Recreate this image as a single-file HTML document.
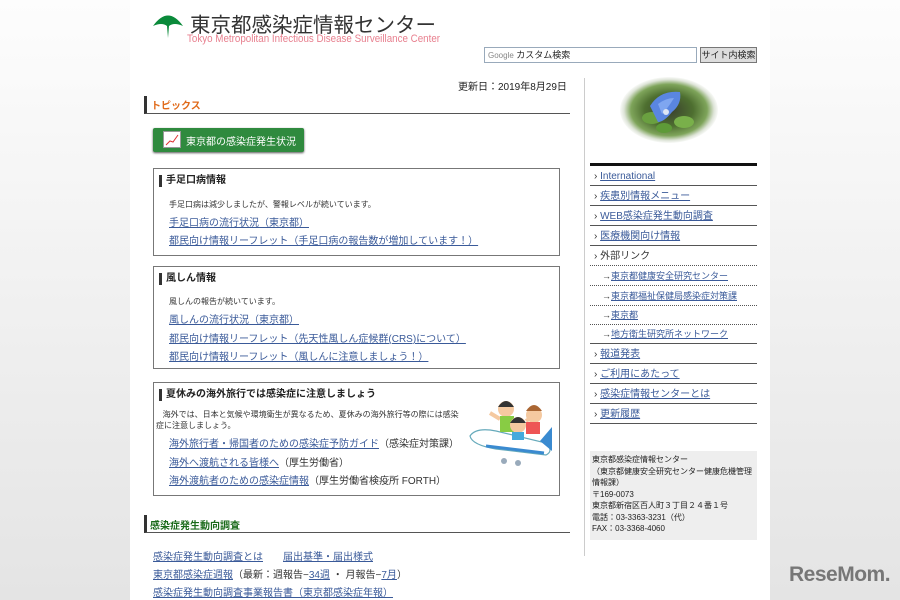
<!DOCTYPE html>
<html><head><meta charset="utf-8">
<style>
*{margin:0;padding:0;box-sizing:border-box}
body{width:900px;height:600px;overflow:hidden;background:linear-gradient(#fdfdfd,#e4e4e4);font-family:"Liberation Sans","Noto Sans CJK JP",sans-serif;color:#333;position:relative}
.col{position:absolute;left:130px;top:0;width:640px;height:600px;background:#fff}
.a{position:absolute;white-space:nowrap}
a{color:#3a5a99;text-decoration:underline}
.box{position:absolute;left:153px;width:407px;border:1px solid #777;background:#fff}
.bh{position:absolute;left:5px;top:6px;font-size:10px;font-weight:bold;color:#222;border-left:3px solid #333;padding-left:4px;line-height:12px}
.sm{font-size:8px;color:#333}
.ln{font-size:10px}
.side{position:absolute;left:590px;width:167px;font-size:10px;border-bottom:1px solid #555;height:20px;line-height:21px;padding-left:4px}
.side.d{border-bottom:1px dotted #555}
.side.sub{padding-left:12px}
</style></head><body>
<div class="col"></div>
<svg class="a" style="left:152px;top:11px" width="32" height="28" viewBox="0 0 32 28"><path d="M1 15 Q16 -6 31 15 Q22 11 17 15 L16 27 L15 15 Q10 11 1 15Z" fill="#0a8a3a"/></svg>
<div class="a" style="left:190px;top:8px;font-size:20.5px;color:#333">東京都感染症情報センター</div>
<div class="a" style="left:187px;top:33px;font-size:11px;color:#e8808f;transform:scaleX(0.89);transform-origin:left">Tokyo Metropolitan Infectious Disease Surveillance Center</div>
<div class="a" style="left:484px;top:47px;width:213px;height:16px;border:1px solid #9ab;font-size:9px;line-height:14px;padding-left:3px;color:#222"><span style="color:#888;font-size:8px">Google</span> カスタム検索</div>
<div class="a" style="left:700px;top:47px;width:57px;height:16px;border:1px solid #777;background:#ddd;font-size:9px;line-height:14px;text-align:center;color:#222">サイト内検索</div>
<div class="a" style="left:584px;top:78px;width:1px;height:478px;background:#ccc"></div>
<div class="a" style="left:458px;top:78px;font-size:10px;color:#222">更新日：2019年8月29日</div>
<div class="a" style="left:144px;top:96px;width:426px;height:18px;border-bottom:1px solid #555;border-left:3px solid #333"></div>
<div class="a" style="left:151px;top:97px;font-size:10px;font-weight:bold;color:#e06a1a">トピックス</div>
<div class="a" style="left:153px;top:128px;width:151px;height:24px;background:#2f8a3e;border-radius:2px;box-shadow:0 1px 2px #555"></div>
<div class="a" style="left:163px;top:131px;width:18px;height:17px;background:#fff;border:1px solid #999"><svg width="16" height="15"><path d="M2 13 L6 9 L9 10 L14 3" stroke="#d33" fill="none"/></svg></div>
<div class="a" style="left:186px;top:133px;font-size:10px;color:#fff">東京都の感染症発生状況</div>

<div class="box" style="top:168px;height:88px">
<div class="bh">手足口病情報</div>
<div class="a sm" style="left:15px;top:30px">手足口病は減少しましたが、警報レベルが続いています。</div>
<div class="a ln" style="left:15px;top:45px"><a>手足口病の流行状況（東京都）</a></div>
<div class="a ln" style="left:15px;top:63px"><a>都民向け情報リーフレット（手足口病の報告数が増加しています！）</a></div>
</div>
<div class="box" style="top:266px;height:103px">
<div class="bh">風しん情報</div>
<div class="a sm" style="left:15px;top:29px">風しんの報告が続いています。</div>
<div class="a ln" style="left:15px;top:44px"><a>風しんの流行状況（東京都）</a></div>
<div class="a ln" style="left:15px;top:63px"><a>都民向け情報リーフレット（先天性風しん症候群(CRS)について）</a></div>
<div class="a ln" style="left:15px;top:81px"><a>都民向け情報リーフレット（風しんに注意しましょう！）</a></div>
</div>
<div class="box" style="top:382px;height:114px">
<div class="bh">夏休みの海外旅行では感染症に注意しましょう</div>
<div class="a sm" style="left:2px;top:26px;white-space:normal;width:305px;line-height:11px">&nbsp;&nbsp;&nbsp;海外では、日本と気候や環境衛生が異なるため、夏休みの海外旅行等の際には感染症に注意しましょう。</div>
<div class="a ln" style="left:15px;top:52px"><a>海外旅行者・帰国者のための感染症予防ガイド</a>（感染症対策課）</div>
<div class="a ln" style="left:15px;top:71px"><a>海外へ渡航される皆様へ</a>（厚生労働省）</div>
<div class="a ln" style="left:15px;top:89px"><a>海外渡航者のための感染症情報</a>（厚生労働省検疫所 FORTH）</div>
<svg class="a" style="left:312px;top:8px" width="90" height="80" viewBox="0 0 90 80">
<path d="M4 45 Q10 36 30 40 L80 52 Q88 60 80 64 L30 58 Q6 54 4 45Z" fill="#fff" stroke="#6ab" stroke-width="1.2"/>
<path d="M20 55 L78 62" stroke="#3a8ad0" stroke-width="3"/>
<path d="M74 50 L86 36 L86 60Z" fill="#3a8ad0"/>
<path d="M24 22 L34 28 M60 30 L72 22" stroke="#f5c9a0" stroke-width="4"/>
<circle cx="40" cy="18" r="8" fill="#f5c9a0"/><path d="M32 16 Q40 4 48 16" fill="#333"/>
<rect x="34" y="25" width="14" height="16" fill="#8c4"/>
<circle cx="68" cy="24" r="8" fill="#f5c9a0"/><path d="M60 20 Q68 8 76 20" fill="#a63"/>
<rect x="60" y="31" width="14" height="12" fill="#e55"/>
<circle cx="52" cy="34" r="8" fill="#f5c9a0"/><path d="M44 32 Q52 20 60 32" fill="#333"/>
<rect x="46" y="41" width="12" height="8" fill="#4ad"/>
<circle cx="38" cy="70" r="3" fill="#9ab"/><circle cx="52" cy="72" r="3" fill="#9ab"/>
</svg>
</div>

<div class="a" style="left:144px;top:515px;width:426px;height:18px;border-bottom:1px solid #555;border-left:3px solid #333"></div>
<div class="a" style="left:150px;top:517px;font-size:10px;font-weight:bold;color:#1a6a1a">感染症発生動向調査</div>
<div class="a ln" style="left:153px;top:548px"><a>感染症発生動向調査とは</a>　　<a>届出基準・届出様式</a></div>
<div class="a ln" style="left:153px;top:566px"><a>東京都感染症週報</a>（最新：週報告−<a>34週</a> ・ 月報告−<a>7月</a>）</div>
<div class="a ln" style="left:153px;top:584px"><a>感染症発生動向調査事業報告書（東京都感染症年報）</a></div>

<div class="a" style="left:620px;top:77px;width:98px;height:66px;border-radius:50%;background:radial-gradient(ellipse at center,#3a3f2e 0%,#4e6f30 35%,#7ea45a 55%,rgba(200,210,190,0.6) 65%,rgba(255,255,255,0) 72%)"></div>
<svg class="a" style="left:636px;top:82px" width="64" height="56" viewBox="0 0 64 56">
<ellipse cx="16" cy="36" rx="10" ry="6" fill="#6aa040"/><ellipse cx="48" cy="40" rx="10" ry="6" fill="#79b04a"/><ellipse cx="28" cy="46" rx="8" ry="5" fill="#5e9a38"/>
<path d="M14 24 Q24 8 44 10 Q46 22 36 30 Q28 40 22 40 Q18 32 14 24Z" fill="#5a86e0"/>
<path d="M22 22 Q30 16 38 16 Q32 26 26 32Z" fill="#7fa6f0"/>
<circle cx="30" cy="30" r="3" fill="#dde6f5"/></svg>
<div class="a" style="left:590px;top:163px;width:167px;height:3px;background:#111"></div>
<div class="side" style="top:166px">› <a>International</a></div>
<div class="side" style="top:186px">› <a>疾患別情報メニュー</a></div>
<div class="side" style="top:206px">› <a>WEB感染症発生動向調査</a></div>
<div class="side" style="top:226px">› <a>医療機関向け情報</a></div>
<div class="side d" style="top:246px">› 外部リンク</div>
<div class="side d sub" style="top:266px;font-size:9px">→<a>東京都健康安全研究センター</a></div>
<div class="side d sub" style="top:286px;font-size:9px">→<a>東京都福祉保健局感染症対策課</a></div>
<div class="side d sub" style="top:305px;font-size:9px">→<a>東京都</a></div>
<div class="side sub" style="top:324px;font-size:9px">→<a>地方衛生研究所ネットワーク</a></div>
<div class="side" style="top:344px">› <a>報道発表</a></div>
<div class="side" style="top:364px">› <a>ご利用にあたって</a></div>
<div class="side" style="top:384px">› <a>感染症情報センターとは</a></div>
<div class="side" style="top:404px">› <a>更新履歴</a></div>
<div class="a" style="left:590px;top:451px;width:167px;height:89px;background:#eee;font-size:8px;line-height:11.5px;padding:3px 2px;white-space:normal;color:#222">東京都感染症情報センター<br>（東京都健康安全研究センター健康危機管理情報課）<br>〒169-0073<br>東京都新宿区百人町３丁目２４番１号<br>電話：03-3363-3231（代）<br>FAX：03-3368-4060</div>
<div class="a" style="left:789px;top:563px;font-size:21px;font-weight:bold;color:#777;letter-spacing:-0.5px">ReseMom.</div>
</body></html>
